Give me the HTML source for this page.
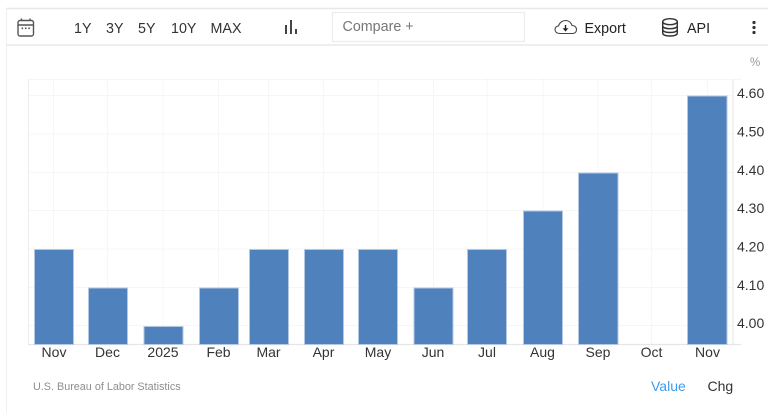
<!DOCTYPE html>
<html>
<head>
<meta charset="utf-8">
<style>
html,body{margin:0;padding:0;background:#fff;width:768px;height:413px;overflow:hidden}
svg{display:block}
text{font-family:"Liberation Sans",sans-serif}
</style>
</head>
<body>
<svg width="768" height="413" viewBox="0 0 768 413" xmlns="http://www.w3.org/2000/svg">
<rect width="768" height="413" fill="#fff"/>
<!-- frame -->
<path d="M6 8.5H768M6 45H768" stroke="#e8e8e8" stroke-width="1.4" fill="none"/>
<path d="M6.5 8V413" stroke="#f0f0f0" stroke-width="1" fill="none"/>
<!-- calendar icon -->
<g fill="none" stroke="#555" stroke-width="1.4">
<rect x="18" y="20.5" width="15.5" height="15.5" rx="2"/>
<path d="M18 25H33.5M21.5 18.5V20.5M30 18.5V20.5"/>
</g>
<g fill="#555"><rect x="21.500" y="27.500" width="1.600" height="1.600"/><rect x="24.900" y="27.500" width="1.600" height="1.600"/><rect x="28.300" y="27.500" width="1.600" height="1.600"/></g>
<!-- ranges -->
<g font-size="14.3" fill="#333">
<text x="74" y="33">1Y</text>
<text x="106" y="33">3Y</text>
<text x="138" y="33">5Y</text>
<text x="171" y="33">10Y</text>
<text x="210.500" y="33">MAX</text>
</g>
<!-- bar icon -->
<g fill="#444">
<rect x="285" y="25" width="2" height="9"/>
<rect x="290" y="20" width="2" height="14"/>
<rect x="295" y="29" width="2" height="5"/>
</g>
<!-- compare -->
<rect x="332.500" y="12.500" width="192" height="29" fill="#fff" stroke="#ececec" stroke-width="1.2"/>
<text x="342.500" y="31" font-size="14.300" fill="#777">Compare +</text>
<!-- export icon -->
<path d="M560 33.500C556.500 33.500 555 31.500 555 29.500C555 27.500 556.500 26 558.500 26C559.500 22.500 562.500 20.500 565.500 20.500C569.500 20.500 571.500 23.500 572 25.500C575 25.500 576.500 27.500 576.500 29.500C576.500 31.800 575 33.500 572.500 33.500Z" fill="none" stroke="#444" stroke-width="1.1"/>
<path d="M565.500 25V30.500" stroke="#222" stroke-width="1.400"/>
<path d="M562.700 28.300H568.300L565.500 31.600Z" fill="#222"/>
<text x="584.500" y="33" font-size="14.300" fill="#222">Export</text>
<!-- db icon -->
<g fill="none" stroke="#333" stroke-width="1.400">
<ellipse cx="670" cy="21.700" rx="7.300" ry="3"/>
<path d="M662.700 21.700V33C662.700 35 666 36 670 36C674 36 677.300 35 677.300 33V21.700"/>
<path d="M662.700 25.700C662.700 27.700 666 28.700 670 28.700C674 28.700 677.300 27.700 677.300 25.700"/>
<path d="M662.700 29.500C662.700 31.500 666 32.500 670 32.500C674 32.500 677.300 31.500 677.300 29.500"/>
</g>
<text x="687" y="33" font-size="14.300" fill="#222">API</text>
<!-- dots -->
<g fill="#333"><circle cx="754" cy="22.500" r="1.600"/><circle cx="754" cy="27.500" r="1.600"/><circle cx="754" cy="32.500" r="1.600"/></g>
<text x="750" y="66" font-size="11.500" fill="#999">%</text>
<!-- grid -->
<g stroke="#f1f1f1" stroke-width="1" stroke-dasharray="1 0.6" fill="none">
<path d="M28 79.500H741M28 95.500H733M28 134H733M28 172.500H733M28 210.500H733M28 249H733M28 287.500H733M28 325.500H733"/>
<path d="M53.500 79V344M107.500 79V344M163 79V344M218.500 79V344M268.500 79V344M323.500 79V344M378 79V344M433.500 79V344M487 79V344M543 79V344M598 79V344M651.500 79V344M707.500 79V344"/>
</g>
<path d="M28.500 79V344.500" stroke="#ececec" fill="none"/>
<path d="M733 79V344.500" stroke="#e6e6e6" fill="none"/>
<path d="M28 344.500H741" stroke="#e6e6e6" stroke-width="1.200" fill="none"/>
<!-- bars -->
<g fill="#4f81bd" stroke="#b4c8e3" stroke-width="1">
<rect x="34.500" y="249.500" width="39" height="95"/>
<rect x="88.500" y="288" width="39" height="56.500"/>
<rect x="144" y="326.500" width="39" height="18"/>
<rect x="199.500" y="288" width="39" height="56.500"/>
<rect x="249.500" y="249.500" width="39" height="95"/>
<rect x="304.500" y="249.500" width="39" height="95"/>
<rect x="358.500" y="249.500" width="39" height="95"/>
<rect x="414" y="288" width="39" height="56.500"/>
<rect x="467.500" y="249.500" width="39" height="95"/>
<rect x="523.500" y="211" width="39" height="133.500"/>
<rect x="578.500" y="173" width="39.500" height="171.500"/>
<rect x="687.500" y="96" width="39.500" height="248.500"/>
</g>
<!-- y labels -->
<g font-size="14" fill="#333">
<text x="737" y="98">4.60</text>
<text x="737" y="136.500">4.50</text>
<text x="737" y="175">4.40</text>
<text x="737" y="213">4.30</text>
<text x="737" y="251.500">4.20</text>
<text x="737" y="290">4.10</text>
<text x="737" y="328">4.00</text>
</g>
<!-- x labels -->
<g font-size="14" fill="#333" text-anchor="middle">
<text x="54" y="357">Nov</text>
<text x="107.500" y="357">Dec</text>
<text x="163" y="357">2025</text>
<text x="218.500" y="357">Feb</text>
<text x="268.500" y="357">Mar</text>
<text x="323.500" y="357">Apr</text>
<text x="378" y="357">May</text>
<text x="433" y="357">Jun</text>
<text x="487" y="357">Jul</text>
<text x="542.500" y="357">Aug</text>
<text x="598" y="357">Sep</text>
<text x="651.500" y="357">Oct</text>
<text x="707.500" y="357">Nov</text>
</g>
<text x="33" y="390" font-size="10.800" fill="#8e8e8e">U.S. Bureau of Labor Statistics</text>
<text x="651" y="391" font-size="14" fill="#3e9bf0">Value</text>
<text x="707.500" y="391" font-size="14" fill="#333">Chg</text>
</svg>
</body>
</html>
